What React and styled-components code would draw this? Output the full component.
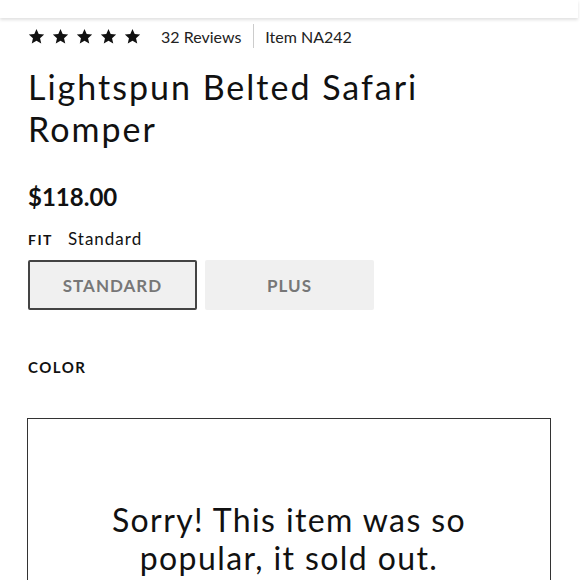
import styled, { createGlobalStyle } from "styled-components";

const GlobalStyle = createGlobalStyle`
  body {
    margin: 0;
    background: #fff;
    font-family: Lato, "Open Sans", sans-serif;
    color: #111;
  }
`;

const TopBar = styled.div`
  height: 18px;
  background: #fff;
  box-shadow: 0 2px 3px rgba(0, 0, 0, 0.12);
  margin-right: 2px;
`;

const Content = styled.div`
  padding: 0 29px 0 28px;
`;

const MetaRow = styled.div`
  display: flex;
  align-items: center;
  height: 24px;
  margin-top: 6px;
  font-size: 16px;
  color: #222;
`;

const Stars = styled.div`
  display: flex;
  gap: 7px;
  margin-right: 20px;
`;

const Divider = styled.span`
  width: 1px;
  align-self: stretch;
  background: #ccc;
  margin: 0 11px 0 12px;
`;

const Title = styled.h1`
  margin: 18px 0 0;
  font-size: 34px;
  line-height: 42px;
  font-weight: 400;
  letter-spacing: 2px;
  max-width: 450px;
`;

const Price = styled.div`
  margin-top: 32px;
  font-size: 24px;
  font-weight: 700;
`;

const FitRow = styled.div`
  display: flex;
  align-items: baseline;
  gap: 15px;
  margin-top: 17px;
`;

const Label = styled.span`
  font-size: ${(p) => p.$size || 14}px;
  font-weight: 700;
  letter-spacing: 1.5px;
  text-transform: uppercase;
`;

const FitValue = styled.span`
  font-size: 17px;
  letter-spacing: 1px;
`;

const Options = styled.div`
  display: flex;
  gap: 8px;
  margin-top: 11px;
`;

const Option = styled.button`
  width: 169px;
  height: 50px;
  box-sizing: border-box;
  background: #f0f0f0;
  border: 2px solid ${(p) => (p.$active ? "#444" : "#f0f0f0")};
  border-radius: 2px;
  font-family: inherit;
  font-size: 17px;
  font-weight: 700;
  letter-spacing: 1px;
  color: #777;
`;

const ColorSection = styled.div`
  margin-top: 47px;
`;

const SoldOut = styled.div`
  margin: 42px 0 0 -1px;
  height: 200px;
  border: 1px solid #333;
  display: flex;
  justify-content: center;
  padding-top: 82px;
  box-sizing: border-box;
`;

const SoldOutText = styled.p`
  margin: 0;
  width: 440px;
  text-align: center;
  font-size: 32px;
  line-height: 38px;
  letter-spacing: 1.4px;
`;

const Star = () => (
  <svg width="17" height="17" viewBox="0 0 24 24">
    <path
      d="M12 1.5l3.1 7.1 7.7.7-5.8 5.1 1.7 7.6L12 18l-6.7 4 1.7-7.6L1.2 9.3l7.7-.7z"
      fill="#111"
    />
  </svg>
);

export default function App() {
  return (
    <>
      <GlobalStyle />
      <TopBar />
      <Content>
        <MetaRow>
          <Stars>
            {[0, 1, 2, 3, 4].map((i) => (
              <Star key={i} />
            ))}
          </Stars>
          <span>32 Reviews</span>
          <Divider />
          <span>Item NA242</span>
        </MetaRow>
        <Title>Lightspun Belted Safari Romper</Title>
        <Price>$118.00</Price>
        <FitRow>
          <Label>Fit</Label>
          <FitValue>Standard</FitValue>
        </FitRow>
        <Options>
          <Option $active>STANDARD</Option>
          <Option>PLUS</Option>
        </Options>
        <ColorSection>
          <Label $size={15}>Color</Label>
        </ColorSection>
        <SoldOut>
          <SoldOutText>Sorry! This item was so popular, it sold out.</SoldOutText>
        </SoldOut>
      </Content>
    </>
  );
}
